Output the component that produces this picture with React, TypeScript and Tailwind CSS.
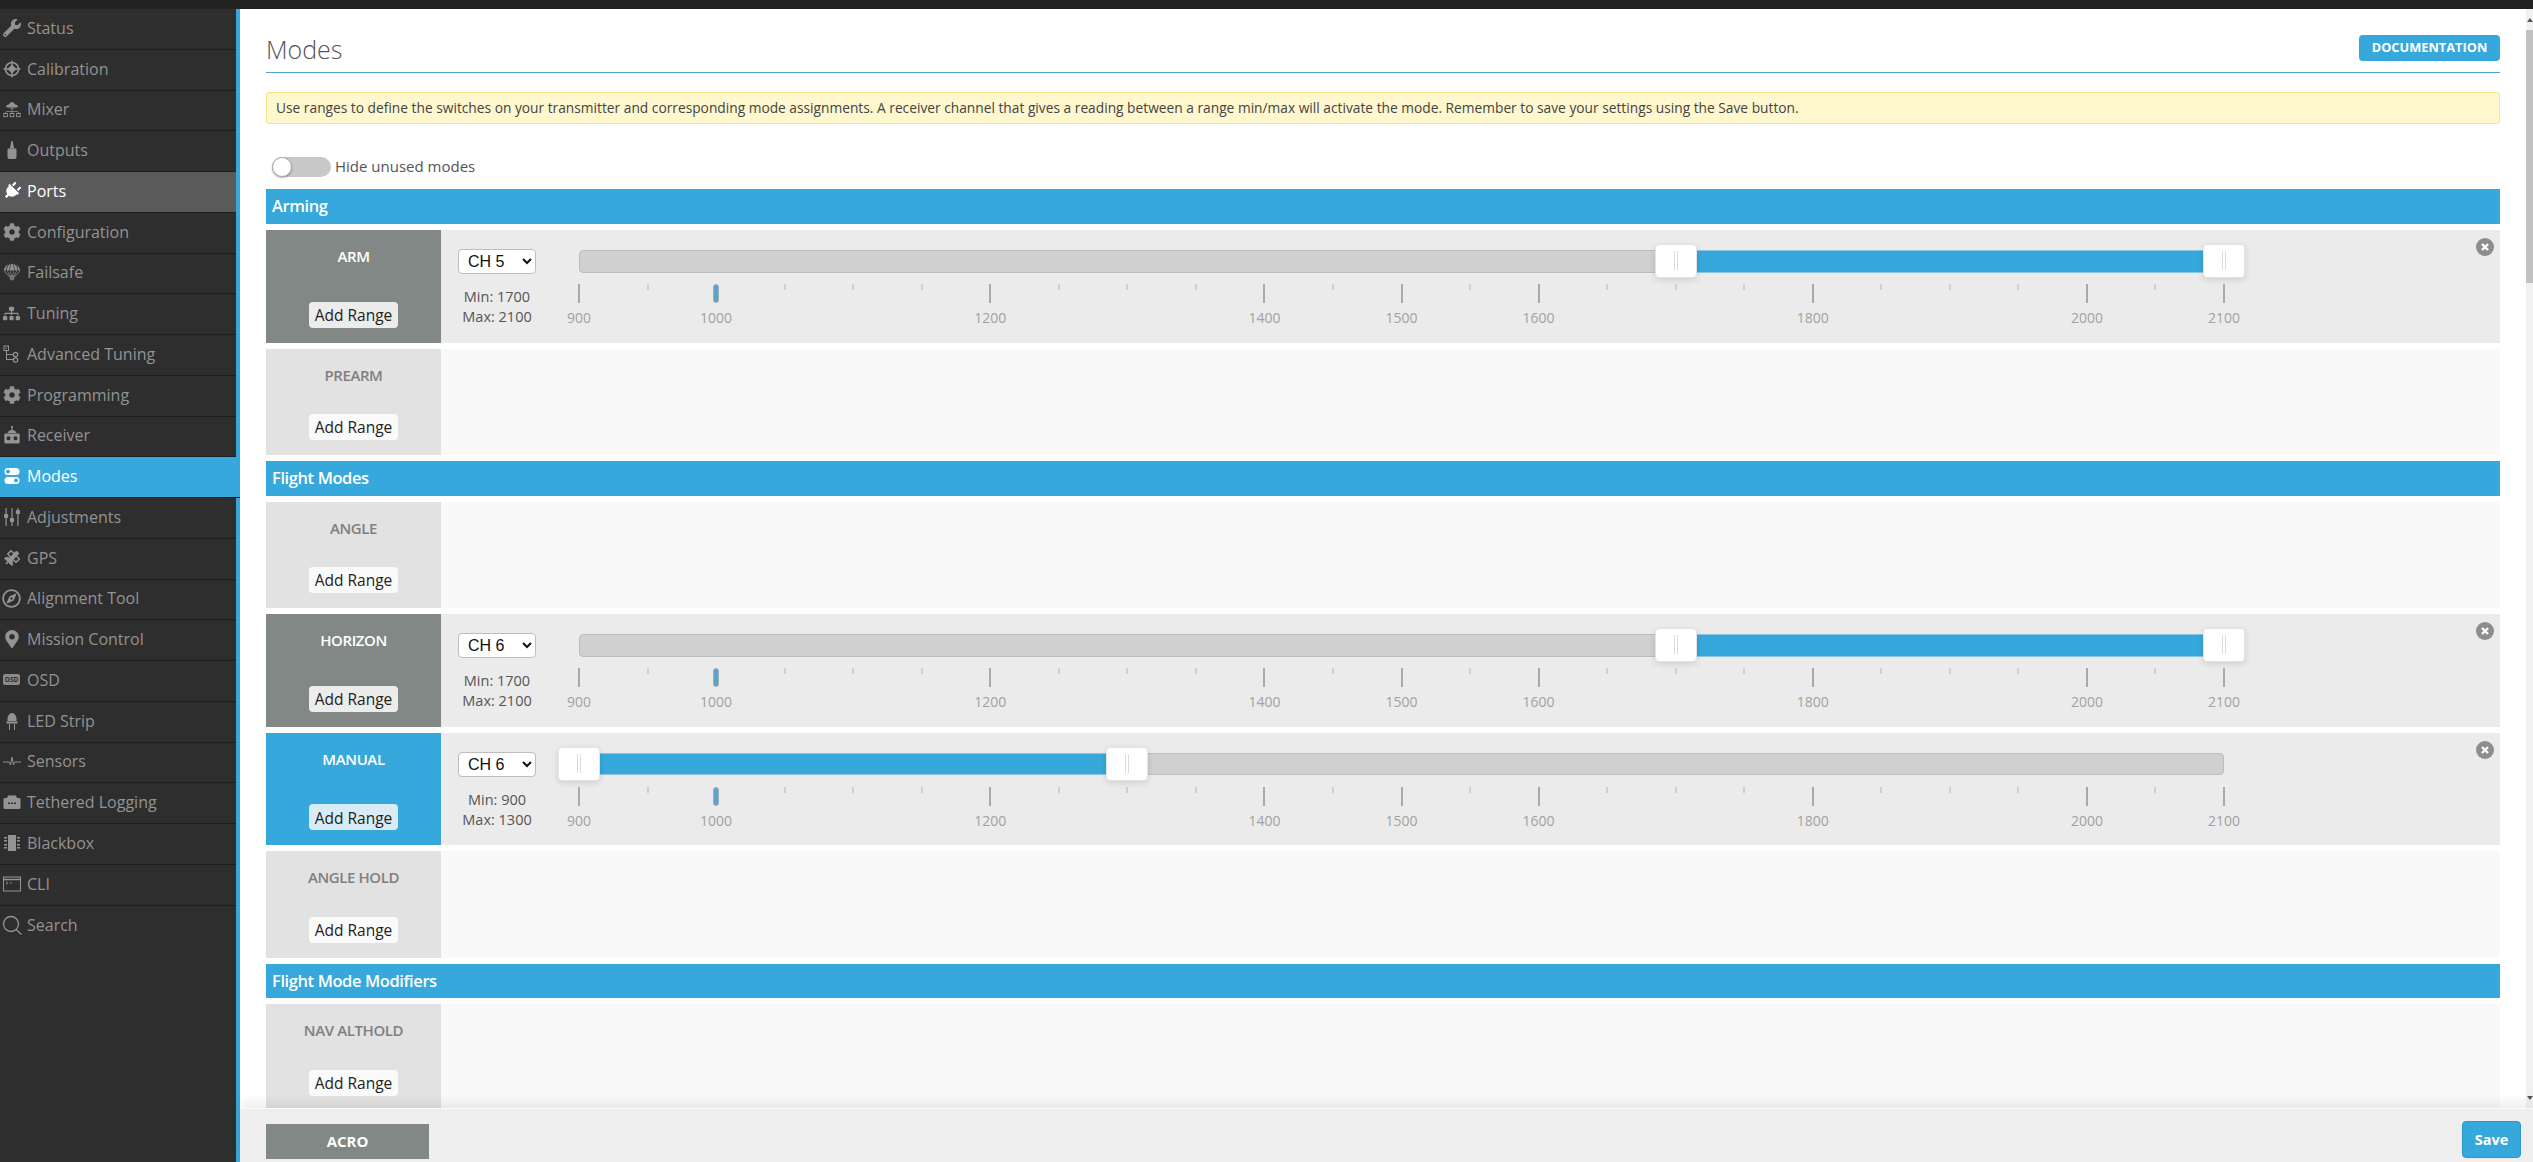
import React from "react";
import { FaWrench, FaCog, FaSitemap, FaPlug, FaSatellite, FaRegCompass, FaMapMarkerAlt } from "react-icons/fa";
import { GiParachute } from "react-icons/gi";

const S = ({ children }: { children: React.ReactNode }) => (
  <svg viewBox="0 0 18 18" width="18" height="18" fill="currentColor">{children}</svg>
);

const Calib = () => (
  <S>
    <circle cx="9" cy="9" r="6.5" fill="none" stroke="currentColor" strokeWidth="1.6" />
    <path d="M8.3 0.5h1.4v17H8.3zM0.5 8.3h17v1.4H0.5z" />
    <path d="M9 4.5 13.5 9 9 13.5 4.5 9z" />
  </S>
);
const Mixer = () => (
  <S>
    <path d="M3 7c0-2 2-2.5 3-2.5C6.500 3 8 2 9 2s2.500 1 3 2.500c1 0 3 .5 3 2.500z" />
    <path d="M3 7h12L9 9z" opacity=".6" />
    <path d="M8.600 8h.8v3h-.8zM3 11h12v.8H3z" />
    <path d="M2.500 12v1.500M9 12v1.500M15.500 12v1.500" stroke="currentColor" strokeWidth=".8" />
    <rect x=".8" y="13.500" width="3.600" height="3.200" fill="none" stroke="currentColor" strokeWidth=".9" />
    <rect x="7.200" y="13.500" width="3.600" height="3.200" fill="none" stroke="currentColor" strokeWidth=".9" />
    <rect x="13.600" y="13.500" width="3.600" height="3.200" fill="none" stroke="currentColor" strokeWidth=".9" />
  </S>
);
const Outputs = () => (
  <S>
    <path d="M8.300 0h1.400l.8 5H7.500z" />
    <path d="M7.500 5c0-1 3-1 3 0l.7 2H6.800z" />
    <path d="M4.500 8c0-1 9-1 9 0v8c0 1.500-1 2-2 2h-5c-1 0-2-.5-2-2z" />
  </S>
);
const AdvTuning = () => (
  <S>
    <rect x="1" y="1" width="4.500" height="4.500" fill="none" stroke="currentColor" strokeWidth="1" />
    <path d="M3 5.500h1V14h6v1H3zM4 9h6v1H4z" />
    <circle cx="12.500" cy="9.500" r="2.200" fill="none" stroke="currentColor" strokeWidth="1.200" />
    <circle cx="12.500" cy="15" r="2.200" fill="none" stroke="currentColor" strokeWidth="1.200" />
    <rect x="2.500" y="2.700" width="1.500" height="1" />
  </S>
);
const Receiver = () => (
  <S>
    <path d="M8.400 0h1.200v5.500H8.400z" />
    <circle cx="9" cy="1" r="1" />
    <path d="M9 4c3 0 4 1.500 4.500 3h-9C5 5.500 6 4 9 4z" />
    <path d="M2.500 7.500h13a1.200 1.200 0 0 1 1.200 1.200v7.600a1.200 1.200 0 0 1-1.200 1.200h-13a1.200 1.200 0 0 1-1.200-1.200V8.700a1.200 1.200 0 0 1 1.200-1.200zM5.500 10.300a2 2 0 1 0 0 4 2 2 0 0 0 0-4zm7 0a2 2 0 1 0 0 4 2 2 0 0 0 0-4z" fillRule="evenodd" />
  </S>
);
const Modes = () => (
  <S>
    <path d="M5 1h8a3.500 3.500 0 0 1 0 7H5a3.500 3.500 0 0 1 0-7zm0 1.500a2 2 0 1 0 0 4 2 2 0 0 0 0-4z" fillRule="evenodd" />
    <path d="M5 10h8a3.500 3.500 0 0 1 0 7H5a3.500 3.500 0 0 1 0-7zm8 1.500a2 2 0 1 0 0 4 2 2 0 0 0 0-4z" fillRule="evenodd" />
  </S>
);
const Adjust = () => (
  <S>
    <path d="M2.500 0h1.200v6H2.500zM2.500 10h1.200v8H2.500zM8.400 0h1.200v10H8.400zM8.400 14h1.200v4H8.400zM14.300 0h1.200v2H14.300zM14.300 6h1.200v12H14.300z" />
    <rect x="1" y="6" width="4.200" height="4" rx="1" />
    <rect x="6.900" y="10" width="4.200" height="4" rx="1" />
    <rect x="12.800" y="2" width="4.200" height="4" rx="1" />
  </S>
);
const Led = () => (
  <S>
    <path d="M4.500 7c0-3 2-6 4.500-6s4.500 3 4.500 6v2h-9z" />
    <rect x="3.500" y="9.500" width="11" height="2" />
    <path d="M6 11.500h1v6.500H6zM11 11.500h1v6.500h-1z" />
  </S>
);
const Sensors = () => (
  <svg viewBox="0 0 18 18" width="18" height="18" fill="none" stroke="currentColor" strokeWidth="1">
    <path d="M0 10h6l1.500 3L9 5l1.500 8 1-3H18" />
  </svg>
);
const Tethered = () => (
  <S>
    <path d="M5 2.500h8l1 2.500H4z" />
    <path fillRule="evenodd" d="M1.500 5h15a1 1 0 0 1 1 1v9a1 1 0 0 1-1 1h-15a1 1 0 0 1-1-1V6a1 1 0 0 1 1-1zM5 9.500v1.500h2V9.500zm3 0v1.500h2V9.500zm3 0v1.500h2V9.500z" />
  </S>
);
const Blackbox = () => (
  <S>
    <rect x="5" y="1" width="8" height="16" />
    <path d="M1 3h3v1.400H1zM1 6h3v1.400H1zM1 10h3v1.400H1zM1 13h3v1.400H1zM14 3h3v1.400h-3zM14 6h3v1.400h-3zM14 10h3v1.400h-3zM14 13h3v1.400h-3z" />
  </S>
);
const Cli = () => (
  <svg viewBox="0 0 18 18" width="18" height="18" fill="none" stroke="currentColor" strokeWidth="1">
    <rect x=".5" y="2" width="17" height="14" />
    <path d="M.5 4.500h17" strokeWidth="1.500" />
    <path d="M3 6.500 5 8 3 9.500M6.500 8H9" strokeWidth=".8" />
  </svg>
);
const Search = () => (
  <svg viewBox="0 0 20 20" width="20" height="20" fill="none" stroke="currentColor" strokeWidth="1.300">
    <circle cx="9" cy="9" r="7.500" />
    <path d="M14 14.500 19.500 19.500" />
  </svg>
);
const Osd = () => (
  <div className="w-[17px] h-[11px] rounded-[2px] bg-[#8a8a8a] text-[#2e2e2e] text-[6.5px] font-bold leading-[11px] text-center">OSD</div>
);

type Nav = { label: string; icon: React.ReactNode; state?: "hover" | "active" };
const nav: Nav[] = [
  { label: "Status", icon: <FaWrench size={18} /> },
  { label: "Calibration", icon: <Calib /> },
  { label: "Mixer", icon: <Mixer /> },
  { label: "Outputs", icon: <Outputs /> },
  { label: "Ports", icon: <FaPlug size={18} className="rotate-45" />, state: "hover" },
  { label: "Configuration", icon: <FaCog size={18} /> },
  { label: "Failsafe", icon: <GiParachute size={18} /> },
  { label: "Tuning", icon: <FaSitemap size={17} /> },
  { label: "Advanced Tuning", icon: <AdvTuning /> },
  { label: "Programming", icon: <FaCog size={18} /> },
  { label: "Receiver", icon: <Receiver /> },
  { label: "Modes", icon: <Modes />, state: "active" },
  { label: "Adjustments", icon: <Adjust /> },
  { label: "GPS", icon: <FaSatellite size={16} /> },
  { label: "Alignment Tool", icon: <FaRegCompass size={19} /> },
  { label: "Mission Control", icon: <FaMapMarkerAlt size={18} /> },
  { label: "OSD", icon: <Osd /> },
  { label: "LED Strip", icon: <Led /> },
  { label: "Sensors", icon: <Sensors /> },
  { label: "Tethered Logging", icon: <Tethered /> },
  { label: "Blackbox", icon: <Blackbox /> },
  { label: "CLI", icon: <Cli /> },
  { label: "Search", icon: <Search /> },
];

const MAJOR = [900, 1000, 1200, 1400, 1500, 1600, 1800, 2000, 2100];
const pos = (v: number) => ((v - 900) / 1200) * 1645;
const ticks: number[] = [];
for (let v = 900; v <= 2100; v += 50) ticks.push(v);

function Slider({ from, to }: { from: number; to: number }) {
  return (
    <div className="relative ml-[43px] w-[1645px] h-full">
      <div className="absolute top-[20px] left-0 right-0 h-[22.67px] rounded-[4px] bg-[#d0d0d0] border border-[#bdbdbd]" />
      <div
        className="absolute top-[20px] h-[22.67px] bg-[#37a8db] border-y border-[#8cc6e2]"
        style={{ left: pos(from), width: pos(to) - pos(from) }}
      />
      {[from, to].map((v) => (
        <div
          key={v}
          className="absolute top-[14px] w-[42px] h-[34px] -ml-[21px] rounded-[4px] bg-white border border-[#e4e4e4] shadow-[0_2px_6px_rgba(0,0,0,0.12)] flex justify-center items-center gap-[2px]"
          style={{ left: pos(v) }}
        >
          <div className="w-px h-[19px] bg-[#dcdcdc]" />
          <div className="w-px h-[19px] bg-[#dcdcdc]" />
        </div>
      ))}
      {ticks.map((v) =>
        MAJOR.includes(v) ? (
          <div key={v} className="absolute top-[54px]" style={{ left: pos(v) }}>
            {v === 1000 ? (
              <div className="w-[6px] -ml-[3px] h-[19px] rounded-full bg-[#5da3c7] border border-[#9bb0bb]" />
            ) : (
              <div className="w-[2px] -ml-px h-[19px] bg-[#a9a9a9]" />
            )}
          </div>
        ) : (
          <div key={v} className="absolute top-[54px] w-[2px] -ml-px h-[6px] bg-[#cfcfcf]" style={{ left: pos(v) }} />
        )
      )}
      {MAJOR.map((v) => (
        <div
          key={v}
          className="absolute top-[78px] w-[60px] -ml-[30px] text-center text-[14px] leading-[20px] text-[#a1a1a1]"
          style={{ left: pos(v) }}
        >
          {v}
        </div>
      ))}
    </div>
  );
}

type RowT = { name: string; kind?: "on" | "blue"; ch?: string; min?: number; max?: number };

function Row({ name, kind, ch, min, max }: RowT) {
  const used = !!kind;
  return (
    <div className={`flex shrink-0 ${used ? "h-[112.67px] bg-[#ebebeb]" : "h-[106.33px] bg-[#f9f9f9]"}`}>
      <div
        className={`relative w-[175px] shrink-0 flex flex-col items-center pt-[16px] ${
          kind === "on" ? "bg-[#828885] text-white" : kind === "blue" ? "bg-[#37a8db] text-white" : "bg-[#e2e2e2] text-[#7f7f7f]"
        }`}
      >
        <div className="text-[15px] leading-[20px] font-semibold tracking-[-0.4px]">{name}</div>
        <button
          className={`mt-auto mb-[15px] w-[89px] h-[26px] pt-[1px] rounded-[4px] text-[15.5px] leading-[24px] text-[#222] whitespace-nowrap ${
            kind === "on" ? "bg-[#ececec]" : kind === "blue" ? "bg-[#d7ecf7]" : "bg-[#fafafa]"
          }`}
        >
          Add Range
        </button>
      </div>
      {used && (
        <div className="relative flex-1 flex">
          <div className="ml-[17px] w-[78px] shrink-0 pt-[19px] flex flex-col items-center">
            <select className="appearance-auto w-[78px] h-[25px] rounded-[4px] border border-[#bdbdbd] bg-white pl-[5px] text-[16px] text-[#111] font-['Liberation_Sans',sans-serif]">
              <option>{ch}</option>
            </select>
            <div className="mt-[13px] text-[14.5px] leading-[20px] text-[#555] whitespace-nowrap text-center">
              <div>Min: {min}</div>
              <div>Max: {max}</div>
            </div>
          </div>
          <Slider from={min!} to={max!} />
          <div className="absolute top-[8px] right-[6px] w-[18px] h-[18px] rounded-full bg-[#8d8d8d] flex items-center justify-center">
            <svg viewBox="0 0 10 10" width="10" height="10" stroke="white" strokeWidth="2.400">
              <path d="M2 2 8 8M8 2 2 8" />
            </svg>
          </div>
        </div>
      )}
    </div>
  );
}

const Head = ({ t }: { t: string }) => (
  <div className="h-[34.67px] shrink-0 bg-[#37a8db] text-white text-[16.5px] font-semibold tracking-[-0.4px] leading-[34.67px] pl-[6px]">{t}</div>
);

export default function App() {
  return (
    <div className="w-[2533px] h-[1162px] overflow-hidden flex flex-col bg-white font-['Open_Sans',sans-serif]">
      <div className="h-[9px] shrink-0 bg-[#222222]" />
      <div className="flex-1 min-h-0 flex">
        <nav className="w-[240px] shrink-0 bg-[#2e2e2e] border-r-4 border-[#37a8db]">
          {nav.map((n) => (
            <div
              key={n.label}
              className={`relative h-[40.75px] flex items-center pb-[2px] border-b border-[#1f1f1f] text-[16px] ${
                n.state === "active"
                  ? "bg-[#37a8db] text-white mr-[-4px]"
                  : n.state === "hover"
                  ? "bg-[#5a5a5a] text-white"
                  : n.label === "Search"
                  ? "text-[#939393] border-b-0"
                  : "text-[#939393]"
              }`}
            >
              <div className="w-[23px] flex justify-center shrink-0">{n.icon}</div>
              <span className="ml-[4px]">{n.label}</span>
            </div>
          ))}
        </nav>
        <div className="flex-1 min-w-0 flex flex-col">
          <div className="flex-1 min-h-0 flex">
            <main className="flex-1 min-w-0 overflow-hidden px-[26px]">
              <div className="h-[64px] pt-[26px] border-b border-[#49a5d0] flex justify-between items-start">
                <h1 className="text-[25px] leading-[28px] font-light text-[#555]">Modes</h1>
                <button className="w-[141px] h-[26px] rounded-[4px] bg-[#37a8db] text-white text-[12.8px] font-bold">DOCUMENTATION</button>
              </div>
              <div className="mt-[19px] h-[32px] rounded-[3px] border border-[#f6e58a] bg-[#fff7cd] pl-[9px] text-[13.75px] leading-[29px] text-[#444] whitespace-nowrap">
                Use ranges to define the switches on your transmitter and corresponding mode assignments. A receiver channel that gives a reading between a range min/max will activate the mode. Remember to save your settings using the Save button.
              </div>
              <div className="mt-[33px] ml-[6px] h-[20px] flex items-center">
                <div className="relative w-[59px] h-[20px] rounded-full bg-[#c8c8c8]">
                  <div className="absolute left-0 top-0 w-[20px] h-[20px] rounded-full bg-white border border-[#aaa] shadow-[0_1px_2px_rgba(0,0,0,0.3)]" />
                </div>
                <span className="ml-[4px] pb-[2px] text-[15px] font-medium text-[#555]">Hide unused modes</span>
              </div>
              <div className="mt-[12.33px] flex flex-col gap-[6px]">
                <Head t="Arming" />
                <Row name="ARM" kind="on" ch="CH 5" min={1700} max={2100} />
                <Row name="PREARM" />
                <Head t="Flight Modes" />
                <Row name="ANGLE" />
                <Row name="HORIZON" kind="on" ch="CH 6" min={1700} max={2100} />
                <Row name="MANUAL" kind="blue" ch="CH 6" min={900} max={1300} />
                <Row name="ANGLE HOLD" />
                <Head t="Flight Mode Modifiers" />
                <Row name="NAV ALTHOLD" />
              </div>
            </main>
            <div className="w-[7px] shrink-0 bg-[#f1f1f1] flex flex-col items-center">
              <div className="h-[21px] flex items-center text-[#555]">
                <svg viewBox="0 0 6 4" width="6" height="4" fill="currentColor"><path d="M3 0 6 4H0z" /></svg>
              </div>
              <div className="w-full h-[253px] bg-[#c1c1c1]" />
              <div className="mt-auto h-[21px] flex items-center text-[#555]">
                <svg viewBox="0 0 6 4" width="6" height="4" fill="currentColor"><path d="M0 0H6L3 4z" /></svg>
              </div>
            </div>
          </div>
          <footer className="relative h-[54px] shrink-0 bg-[#eeeeee] border-t border-[#fafafa] shadow-[0_-6px_10px_rgba(0,0,0,0.07)] flex justify-between items-start pl-[26px] pr-[12px]">
            <div className="mt-[15px] w-[163px] h-[35px] bg-[#828885] text-white text-[15px] font-bold leading-[35px] text-center">ACRO</div>
            <button className="mt-[12px] w-[59px] h-[37px] rounded-[4px] bg-[#37a8db] border border-[#2f97c6] text-white text-[14.5px] font-bold">Save</button>
          </footer>
        </div>
      </div>
    </div>
  );
}
